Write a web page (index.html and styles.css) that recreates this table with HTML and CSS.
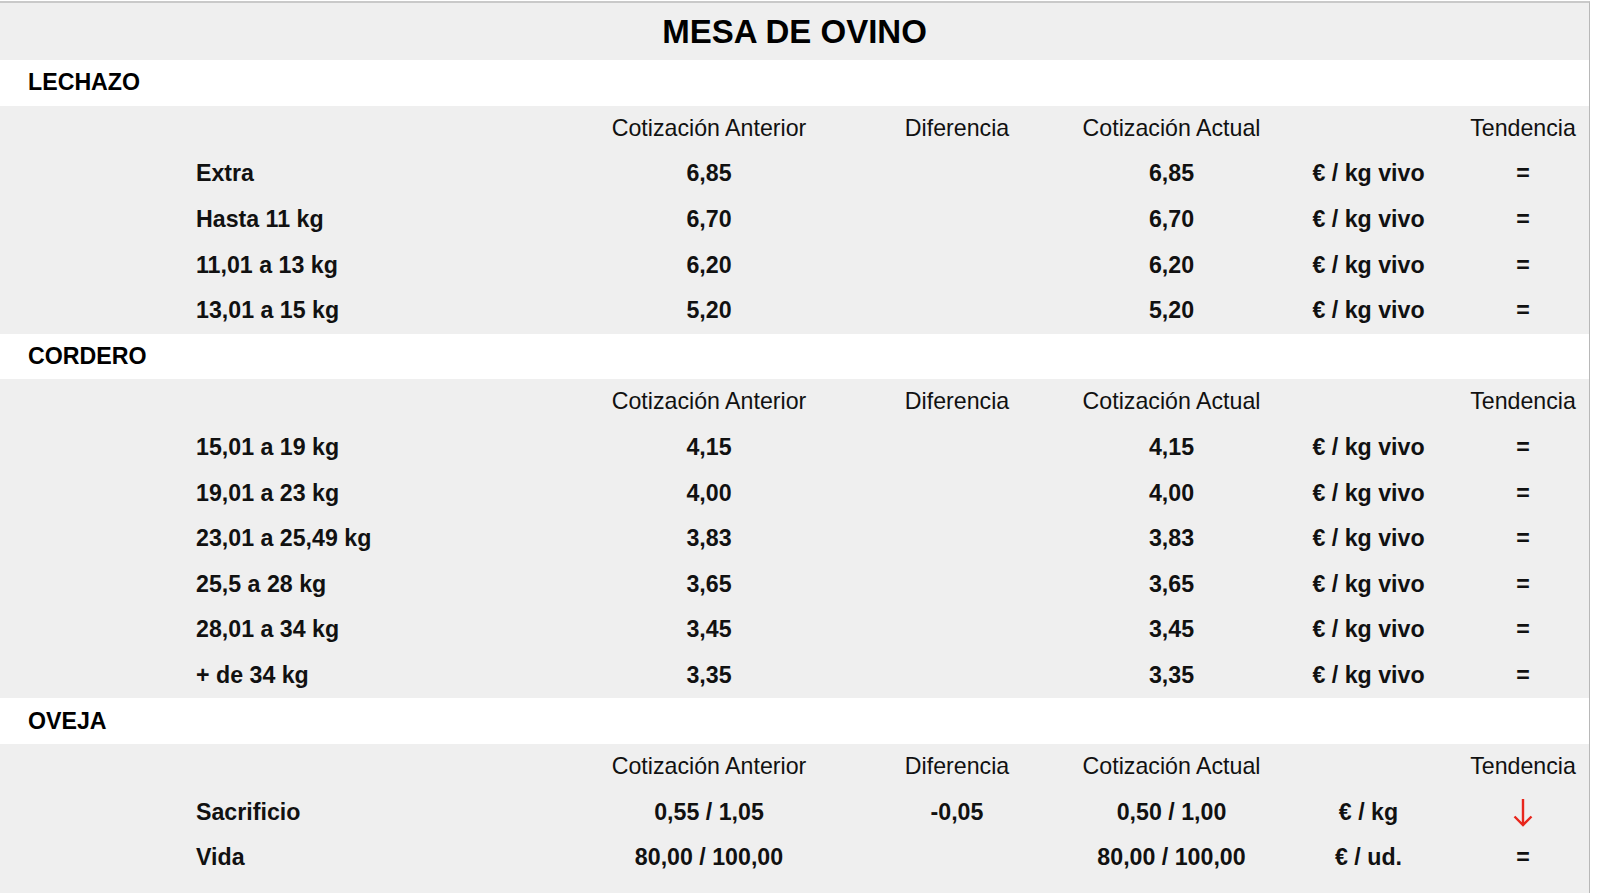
FILE: index.html
```html
<!DOCTYPE html>
<html lang="es">
<head>
<meta charset="utf-8">
<title>Mesa de Ovino</title>
<link rel="stylesheet" href="styles.css">
</head>
<body>
<div class="sheet">
  <table class="grid">
    <colgroup>
      <col class="c-indent">
      <col class="c-label">
      <col class="c-ant">
      <col class="c-dif">
      <col class="c-act">
      <col class="c-unit">
      <col class="c-tend">
    </colgroup>
    <tr class="title-row"><td colspan="7" class="title">MESA DE OVINO</td></tr>

    <tr class="section"><td colspan="7">LECHAZO</td></tr>
    <tr class="head"><td></td><td></td><td>Cotización Anterior</td><td>Diferencia</td><td>Cotización Actual</td><td></td><td>Tendencia</td></tr>
    <tr class="row"><td></td><td class="lbl">Extra</td><td>6,85</td><td></td><td>6,85</td><td>€ / kg vivo</td><td>=</td></tr>
    <tr class="row"><td></td><td class="lbl">Hasta 11 kg</td><td>6,70</td><td></td><td>6,70</td><td>€ / kg vivo</td><td>=</td></tr>
    <tr class="row"><td></td><td class="lbl">11,01 a 13 kg</td><td>6,20</td><td></td><td>6,20</td><td>€ / kg vivo</td><td>=</td></tr>
    <tr class="row"><td></td><td class="lbl">13,01 a 15 kg</td><td>5,20</td><td></td><td>5,20</td><td>€ / kg vivo</td><td>=</td></tr>

    <tr class="section"><td colspan="7">CORDERO</td></tr>
    <tr class="head"><td></td><td></td><td>Cotización Anterior</td><td>Diferencia</td><td>Cotización Actual</td><td></td><td>Tendencia</td></tr>
    <tr class="row"><td></td><td class="lbl">15,01 a 19 kg</td><td>4,15</td><td></td><td>4,15</td><td>€ / kg vivo</td><td>=</td></tr>
    <tr class="row"><td></td><td class="lbl">19,01 a 23 kg</td><td>4,00</td><td></td><td>4,00</td><td>€ / kg vivo</td><td>=</td></tr>
    <tr class="row"><td></td><td class="lbl">23,01 a 25,49 kg</td><td>3,83</td><td></td><td>3,83</td><td>€ / kg vivo</td><td>=</td></tr>
    <tr class="row"><td></td><td class="lbl">25,5 a 28 kg</td><td>3,65</td><td></td><td>3,65</td><td>€ / kg vivo</td><td>=</td></tr>
    <tr class="row"><td></td><td class="lbl">28,01 a 34 kg</td><td>3,45</td><td></td><td>3,45</td><td>€ / kg vivo</td><td>=</td></tr>
    <tr class="row"><td></td><td class="lbl">+ de 34 kg</td><td>3,35</td><td></td><td>3,35</td><td>€ / kg vivo</td><td>=</td></tr>

    <tr class="section"><td colspan="7">OVEJA</td></tr>
    <tr class="head"><td></td><td></td><td>Cotización Anterior</td><td>Diferencia</td><td>Cotización Actual</td><td></td><td>Tendencia</td></tr>
    <tr class="row"><td></td><td class="lbl">Sacrificio</td><td>0,55 / 1,05</td><td>-0,05</td><td>0,50 / 1,00</td><td>€ / kg</td><td><svg class="arrow" width="22" height="30" viewBox="0 0 22 30"><path d="M11 1 V27 M2.5 18.5 L11 27 L19.5 18.5" fill="none" stroke="#e8261c" stroke-width="2.4"/></svg></td></tr>
    <tr class="row"><td></td><td class="lbl">Vida</td><td>80,00 / 100,00</td><td></td><td>80,00 / 100,00</td><td>€ / ud.</td><td>=</td></tr>
  </table>
</div>
</body>
</html>
```

FILE: styles.css
```css
html, body {
  margin: 0;
  padding: 0;
  background: #ffffff;
}

body {
  font-family: "Liberation Sans", Arial, sans-serif;
  color: #111111;
}

.sheet {
  width: 1589px;
  margin-top: 1px;
  border-top: 2px solid #c9c9c9;
  border-right: 1px solid #b8b8b8;
  background: #efefef;
  padding-bottom: 12px;
}

.grid {
  width: 1589px;
  border-collapse: collapse;
  table-layout: fixed;
}

.c-indent { width: 196px; }
.c-label { width: 371px; }
.c-ant { width: 284px; }
.c-dif { width: 212px; }
.c-act { width: 217px; }
.c-unit { width: 177px; }
.c-tend { width: 132px; }

.grid td {
  padding: 0;
  text-align: center;
  vertical-align: middle;
  white-space: nowrap;
}

.title-row td {
  height: 57px;
}

.title {
  font-size: 33px;
  font-weight: bold;
  color: #000;
  padding-bottom: 2px;
}

.section td {
  height: 45.6px;
  background: #ffffff;
  text-align: left;
  padding-left: 28px;
  font-size: 23.2px;
  font-weight: bold;
  color: #000;
}

.head td {
  height: 45.6px;
  font-size: 23.2px;
  font-weight: normal;
}

.row td {
  height: 45.6px;
  font-size: 23.2px;
  font-weight: bold;
}

.row td.lbl {
  text-align: left;
}

.arrow {
  display: block;
  margin: 2px auto 0;
}
```
